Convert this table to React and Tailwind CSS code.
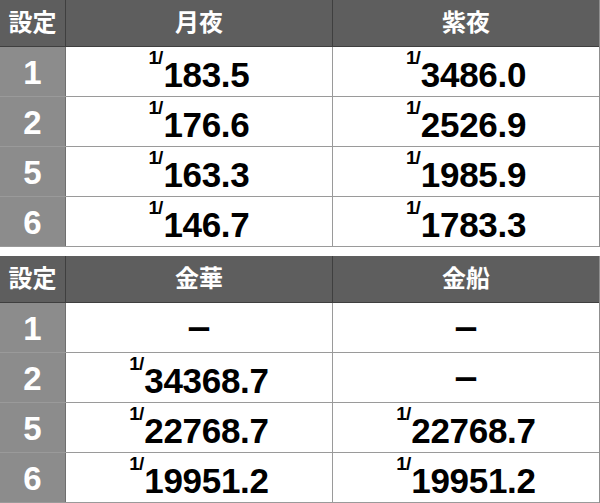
import React from 'react';

const tables = [
  {
    heads: ['月夜', '紫夜'],
    rows: [
      ['1', '183.5', '3486.0'],
      ['2', '176.6', '2526.9'],
      ['5', '163.3', '1985.9'],
      ['6', '146.7', '1783.3'],
    ],
  },
  {
    heads: ['金華', '金船'],
    rows: [
      ['1', null, null],
      ['2', '34368.7', null],
      ['5', '22768.7', '22768.7'],
      ['6', '19951.2', '19951.2'],
    ],
  },
];

const jp = { fontFamily: '"Liberation Sans", "Noto Sans CJK JP", sans-serif' };

const Value = ({ v }) => {
  if (!v) {
    return <span className="text-[25px] font-bold text-black leading-none" style={jp}>ー</span>;
  }
  return (
    <span className="inline-flex items-start text-black font-bold leading-none" style={jp}>
      <span className="text-[19px] tracking-[-1px] mt-[-9px] mr-[1px]">1/</span>
      <span className="text-[35px] tracking-[-0.3px]">{v}</span>
    </span>
  );
};

const Table = ({ heads, rows }) => (
  <div className="w-[600px] border-r border-[#8f8f8f]">
    <div className="grid grid-cols-[66px_267px_266px] h-[47px] bg-[#5e5e5e] border-b border-[#3f3f3f]">
      <div className="flex items-center justify-center border-r border-[#3f3f3f] text-white text-[24px] leading-none font-bold" style={jp}>設定</div>
      {heads.map((h, i) => (
        <div key={h} className={`flex items-center justify-center text-white text-[24px] leading-none font-bold ${i === 0 ? 'border-r border-[#3f3f3f]' : ''}`} style={jp}>
          {h}
        </div>
      ))}
    </div>
    {rows.map((r) => (
      <div key={r[0]} className="grid grid-cols-[66px_267px_266px] h-[50px] border-b border-[#9a9a9a] overflow-hidden">
        <div className="flex items-center justify-center bg-[#8c8c8c] border-r border-[#6f6f6f] text-white text-[33px] leading-none font-bold pt-[2px]" style={jp}>
          {r[0]}
        </div>
        <div className="flex items-center justify-center bg-white border-r border-[#9a9a9a] pt-[6px]">
          <Value v={r[1]} />
        </div>
        <div className="flex items-center justify-center bg-white pt-[6px]">
          <Value v={r[2]} />
        </div>
      </div>
    ))}
  </div>
);

export default function App() {
  return (
    <div className="w-[600px] h-[503px] bg-white flex flex-col gap-[9px]">
      {tables.map((t, i) => (
        <Table key={i} heads={t.heads} rows={t.rows} />
      ))}
    </div>
  );
}
